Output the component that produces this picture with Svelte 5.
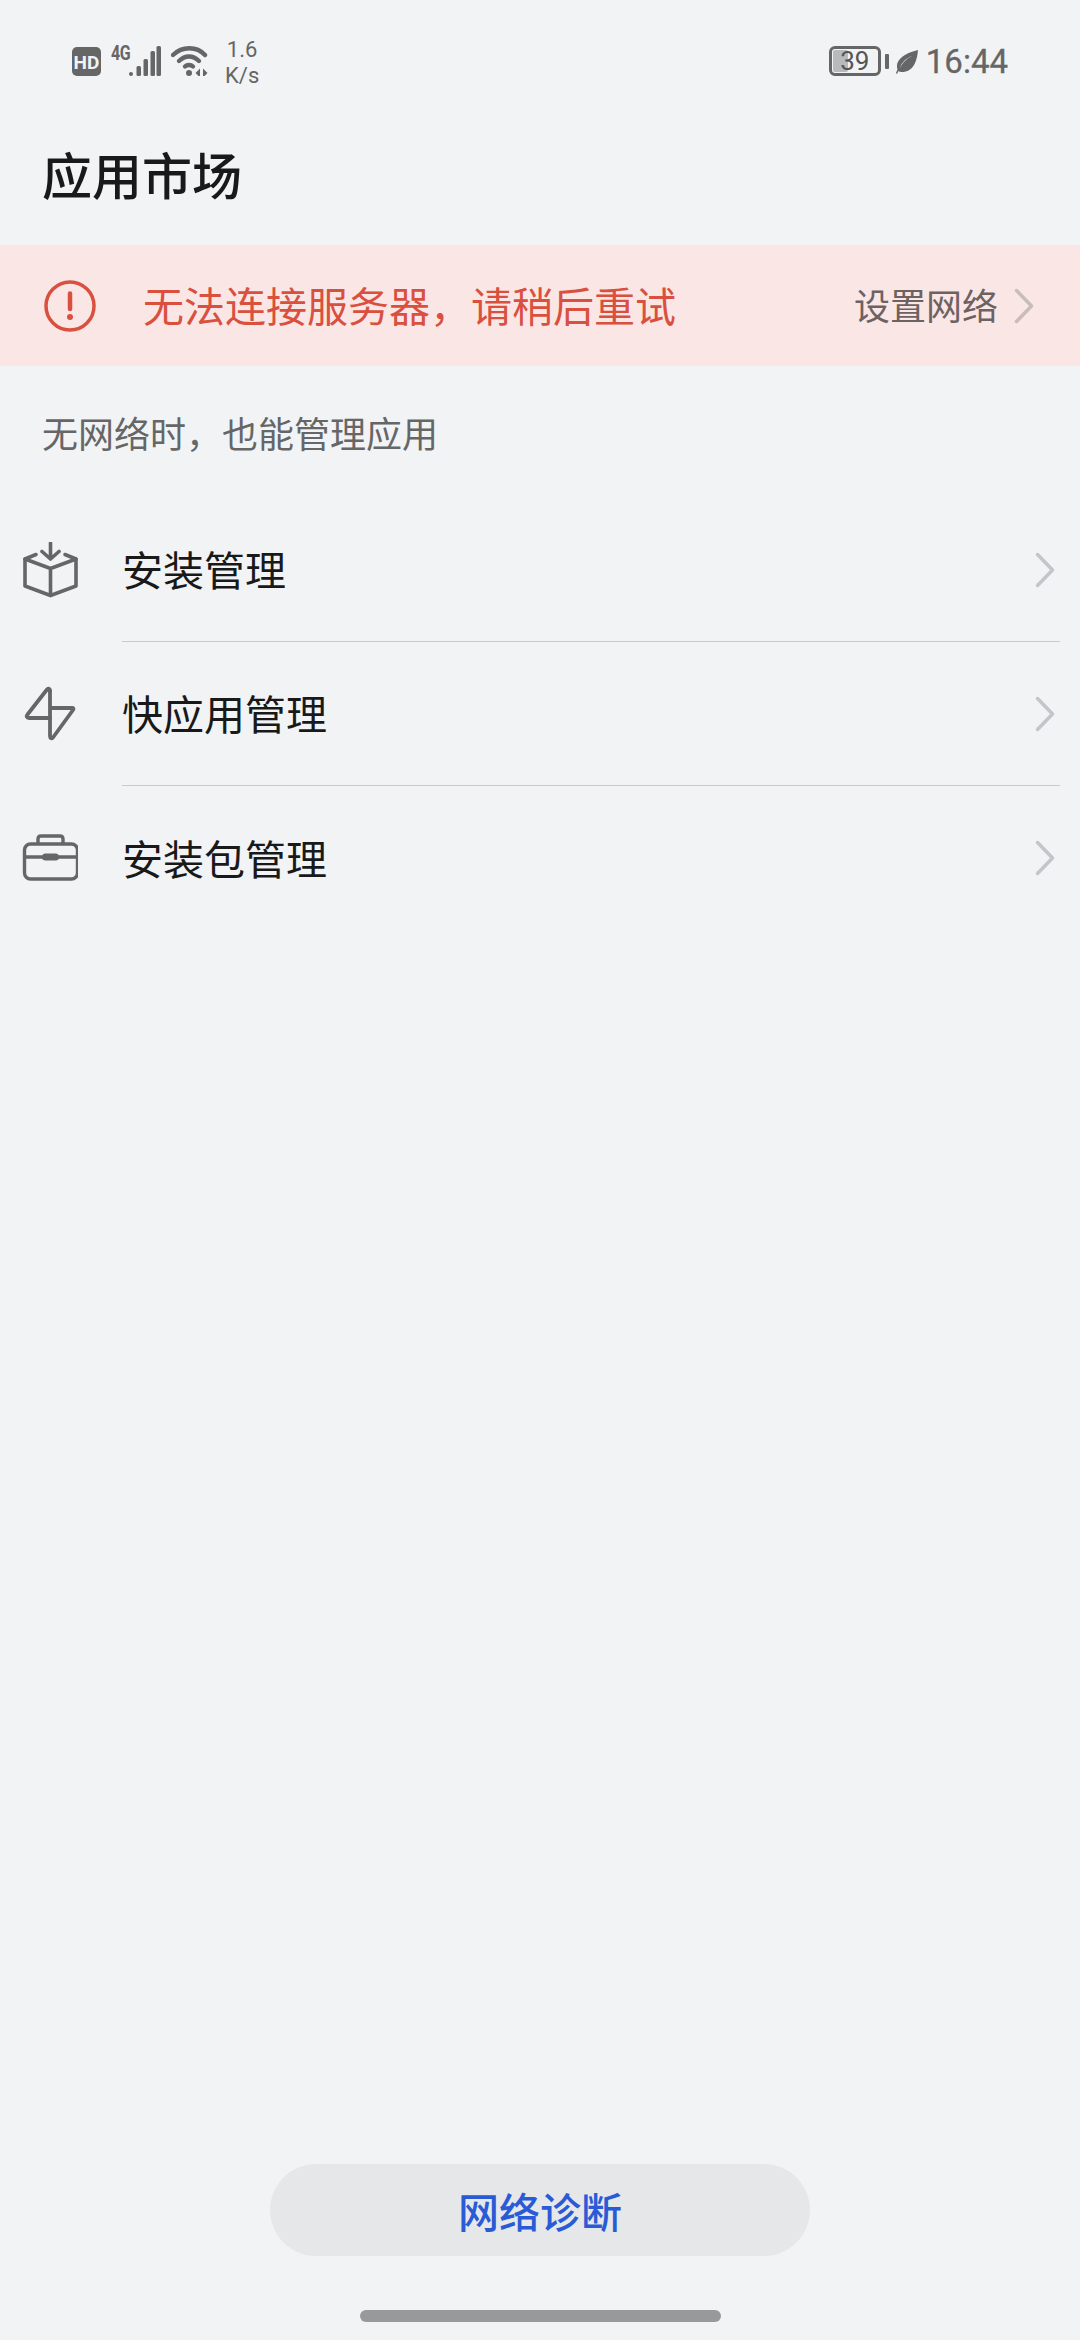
<script>
  const rows = [
    { label: '安装管理', icon: 'box' },
    { label: '快应用管理', icon: 'bolt' },
    { label: '安装包管理', icon: 'case' }
  ];
</script>

<div class="page">
  <header class="status">
    <div class="status-left">
      <svg class="hd" width="29" height="29" viewBox="0 0 29 29"><rect width="29" height="29" rx="5" fill="#666"/><text x="14.5" y="21.500" text-anchor="middle" class="hdt">HD</text></svg>
      <span class="net">4G</span>
      <svg class="sig" width="32" height="30" viewBox="0 0 32 30"><g fill="#666"><circle cx="2" cy="28" r="2"/><rect x="7.500" y="20" width="4.500" height="10" rx="1.500"/><rect x="14.500" y="13" width="4.500" height="17" rx="1.500"/><rect x="21.500" y="5" width="4.500" height="25" rx="1.500"/><rect x="27.500" y="0" width="4.500" height="30" rx="1.500"/></g></svg>
      <svg class="wifi" width="38" height="30" viewBox="0 0 38 30" fill="none" stroke="#666" stroke-width="4.400" stroke-linecap="round"><path d="M2 9C11 0 26 0 34 9"/><path d="M8 15C14 9 22 9 28 15"/><path d="M14 20.500C16 18.500 20 18.500 22 20.500"/><circle cx="18" cy="27" r="3" fill="#666" stroke="none"/><path d="M29 22.500v9l-4.500-4.500zM32 22.500v9l4.500-4.500z" fill="#666" stroke="none"/></svg>
      <div class="speed"><span>1.6</span><span>K/s</span></div>
    </div>
    <div class="status-right">
      <div class="battery"><div class="fill"></div><span class="pct">39</span></div>
      <span class="nub"></span>
      <svg class="leaf" width="22" height="24" viewBox="0 0 22 24"><path d="M22 0C21 12 17 22 6 22C4.500 22 3.500 21.700 2.500 21L1 24L0 23L1.500 19.500C-1 12 5 4 22 0ZM3.500 18.500C7 12 11 8.500 16 6C10.500 8 6 12 3.500 18.500Z" fill="#666" fill-rule="evenodd"/></svg>
      <span class="time">16:44</span>
    </div>
  </header>

  <h1>应用市场</h1>

  <div class="banner">
    <svg class="alert" width="52" height="52" viewBox="0 0 52 52" fill="none"><circle cx="26" cy="26" r="24" stroke="#d9503f" stroke-width="3.500"/><path d="M26 13.500V29" stroke="#d9503f" stroke-width="4.500" stroke-linecap="round"/><circle cx="26" cy="37" r="3" fill="#d9503f"/></svg>
    <span class="msg">无法连接服务器&#xFF0C;请稍后重试</span>
    <span class="setnet">设置网络</span>
    <svg class="chev-b" width="20" height="36" viewBox="0 0 20 36" fill="none"><path d="M2.500 2.500L17.500 18L2.500 33.500" stroke="#c9bcbc" stroke-width="3.500" stroke-linecap="round" stroke-linejoin="round"/></svg>
  </div>

  <p class="hint">无网络时&#xFF0C;也能管理应用</p>

  <ul class="list">
    {#each rows as r, i}
      <li class="row">
        <span class="ico">
          {#if r.icon === 'box'}
            <svg width="56" height="56" viewBox="0 0 56 56" fill="none" stroke="#666" stroke-width="3.600" stroke-linejoin="round" stroke-linecap="round"><path d="M28.500 1V16M20 9.500L28.500 17L37 9.500"/><path d="M14 12.500L3 17V44L28.500 53.500L54 44V17L43 12.500"/><path d="M3 17L28.500 26.500L54 17M28.500 26.500V53.500"/></svg>
          {:else if r.icon === 'bolt'}
            <svg width="56" height="56" viewBox="0 0 56 56" fill="none" stroke="#666" stroke-width="3.800" stroke-linejoin="round" stroke-linecap="round"><path d="M28 5C28 2.500 26.500 2 25 3.500L5.500 28.500C4 30.500 5 32 7 32H28"/><path d="M28 5V50C28 52.500 30 53 31 51.500L51 24C52 22.500 51.500 22 50 22H28"/></svg>
          {:else}
            <svg width="56" height="56" viewBox="0 0 56 56" fill="none" stroke="#666" stroke-width="3.400" stroke-linejoin="round"><rect x="2.500" y="14" width="53" height="35" rx="6"/><path d="M16 14V9C16 7 17 6 19 6H38C40 6 41 7 41 9V14"/><path d="M2.500 27H55.500"/><rect x="20" y="23.500" width="17" height="7" rx="3.500" fill="#666" stroke="none"/></svg>
          {/if}
        </span>
        <div class="row-body" class:last={i === rows.length - 1}>
          <span class="label">{r.label}</span>
          <svg width="20" height="36" viewBox="0 0 20 36" fill="none"><path d="M2.500 2.500L17.500 18L2.500 33.500" stroke="#c4c5c8" stroke-width="3.500" stroke-linecap="round" stroke-linejoin="round"/></svg>
        </div>
      </li>
    {/each}
  </ul>

  <div class="bottom">
    <button class="diag">网络诊断</button>
    <div class="home"></div>
  </div>
</div>

<style>
  :global(body) { margin: 0; background: #f1f3f5; overflow: hidden; }
  .page {
    width: 1080px; height: 2340px; display: flex; flex-direction: column; background: #f1f3f5;
    font-family: "Noto Sans CJK SC", "Noto Sans", sans-serif; color: #191919; box-sizing: border-box;
  }
  .status { height: 122px; padding: 38px 72px 0; box-sizing: border-box; display: flex; justify-content: space-between; align-items: flex-start; }
  .status-left, .status-right { display: flex; align-items: flex-start; }
  .hd { margin-top: 9px; }
  .hdt { font: 700 19px "Roboto", sans-serif; fill: #f1f3f5; }
  .net { font: 700 20px/14px "Roboto", sans-serif; color: #666; margin: 8px 0 0 10px; width: 18px; letter-spacing: -.5px; transform: scaleX(.8); transform-origin: left; }
  .sig { margin-top: 8px; }
  .wifi { margin: 8px 0 0 10px; }
  .speed { display: flex; flex-direction: column; align-items: center; margin: -1px 0 0 16px; font: 400 22px/26px "Roboto", sans-serif; color: #666; }
  .status-right { margin-top: 8px; }
  .battery { width: 52px; height: 30px; box-sizing: border-box; border: 3px solid #666; border-radius: 6px; position: relative; }
  .fill { width: 15px; height: 22px; margin: 1px; background: #b9babc; border-radius: 2px; }
  .pct { position: absolute; inset: 0; text-align: center; font: 400 26px/24px "Roboto", sans-serif; color: #555; }
  .nub { width: 4px; height: 15px; background: #666; margin: 8px 0 0 4px; border-radius: 1px; }
  .leaf { margin: 4px 0 0 7px; }
  .time { font: 400 33px/32px "Roboto", sans-serif; color: #666; margin-left: 8px; -webkit-text-stroke: .3px #666; }
  h1 { margin: 0; height: 123px; box-sizing: border-box; padding-left: 42px; font-size: 50px; line-height: 102px; font-weight: 500; color: #191919; }
  .banner { height: 121px; background: #fbe6e6; display: flex; align-items: center; padding: 0 44px; box-sizing: border-box; }
  .alert { flex: none; }
  .msg { margin-left: 47px; font-size: 41px; line-height: 56px; margin-bottom: 3px; color: #d9503f; flex: 1; white-space: nowrap; }
  .setnet { font-size: 36px; line-height: 50px; margin-bottom: 3px; color: #6d6262; }
  .chev-b { margin-left: 16px; margin-right: 2px; }
  .hint { margin: 0; padding: 42px 0 0 42px; height: 132px; box-sizing: border-box; font-size: 36px; line-height: 48px; color: #666; }
  .list { list-style: none; margin: 0; padding: 0; }
  .row { display: flex; align-items: center; height: 144px; padding-left: 22px; }
  .ico { width: 100px; height: 56px; flex: none; display: block; }
  .row-body { flex: 1; height: 144px; margin-right: 20px; padding-right: 5px; display: flex; align-items: center; justify-content: space-between; border-bottom: 1px solid #c8c9cb; box-sizing: border-box; }
  .row-body.last { border-bottom: none; }
  .label { font-size: 41px; line-height: 56px; margin-bottom: 3px; color: #191919; }
  .bottom { margin-top: auto; display: flex; flex-direction: column; align-items: center; padding-bottom: 18px; }
  .diag { width: 540px; height: 92px; border: none; border-radius: 46px; background: #e6e7e9; color: #2a5bd7; font: 500 41px "Noto Sans CJK SC", sans-serif; padding: 0; }
  .home { width: 361px; height: 12px; border-radius: 6px; background: #999; margin-top: 54px; }
</style>
